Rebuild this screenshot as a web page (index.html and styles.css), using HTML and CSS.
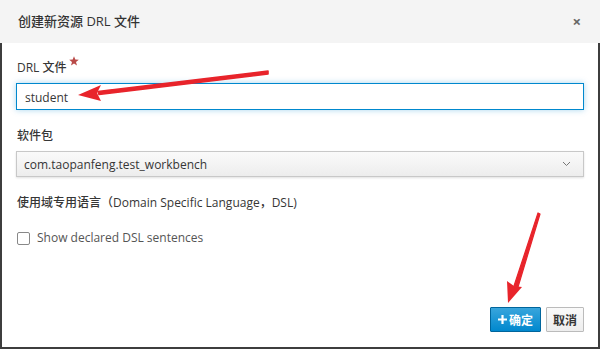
FILE: index.html
```html
<!DOCTYPE html>
<html>
<head>
    <title>创建新资源 DRL 文件</title>
    <link rel="stylesheet" href="styles.css">
</head>
<body>
    <div class="modal">
        <div class="modal-header">
            <span class="modal-title">创建新资源 DRL 文件</span>
            <span class="close">&times;</span>
        </div>

        <div class="modal-body">
            <div class="form-group">
                <label for="file-name">DRL 文件<svg class="required" width="10" height="10" viewBox="0 0 10 10"><path d="M5 0.2 L6.3 3.5 L9.8 3.7 L7 5.9 L8 9.6 L5 7.5 L2 9.6 L3 5.9 L0.2 3.7 L3.7 3.5 Z" fill="#b94a48"/></svg></label>
                <input type="text" id="file-name" class="input focused" value="student">
            </div>

            <div class="form-group">
                <label>软件包</label>
                <div class="select">
                    <span>com.taopanfeng.test_workbench</span>
                    <svg width="9" height="6" viewBox="0 0 9 6"><path d="M1 1 L4.5 4.5 L8 1" fill="none" stroke="#777" stroke-width="1"/></svg>
                </div>
            </div>

            <div class="form-group">
                <label>使用域专用语言（Domain Specific Language，DSL)</label>
            </div>

            <div class="checkbox-row">
                <span class="checkbox"></span>
                <span>Show declared DSL sentences</span>
            </div>
        </div>

        <div class="modal-footer">
            <button class="btn btn-primary"><svg class="plus" width="9" height="9" viewBox="0 0 9 9"><path d="M3.4 0 H5.6 V3.4 H9 V5.6 H5.6 V9 H3.4 V5.6 H0 V3.4 H3.4 Z" fill="#fff"/></svg>确定</button>
            <button class="btn btn-default">取消</button>
        </div>
    </div>

    <!-- annotation arrows drawn over the dialog -->
    <svg class="arrows" width="600" height="349" viewBox="0 0 600 349">
        <path d="M268 71 L98 91.5 L99 94.5 L268 74 Z" fill="#e8242b" stroke="#e8242b" stroke-width="1.6" stroke-linejoin="round"/>
        <path d="M78 95 L101 85 L97 93 L101 101 Z" fill="#e8242b"/>
        <path d="M538 213 L514 286 L518 287 L540 214 Z" fill="#e8242b" stroke="#e8242b" stroke-width="1.2" stroke-linejoin="round"/>
        <path d="M508 303 L507 281 L514 286 L522 287 Z" fill="#e8242b"/>
    </svg>
</body>
</html>
```

FILE: styles.css
```css
body {
    margin: 0;
    font-family: "Open Sans", "Noto Sans CJK SC", sans-serif;
    font-size: 12px;
    color: #363636;
    background-color: #fff;
}
.modal {
    position: relative;
    height: 349px;
    box-sizing: border-box;
    display: flex;
    flex-direction: column;
    border-left: 2px solid #3d3d3d;
    border-right: 2px solid #3d3d3d;
    border-bottom: 2px solid #3d3d3d;
}
.modal-header {
    height: 43px;
    margin: 0 -2px;
    padding: 0 19px 0 18px;
    background-color: #f4f4f4;
    display: flex;
    align-items: center;
    justify-content: space-between;
}
.modal-title {
    font-size: 13px;
    font-weight: 500;
    color: #333;
    margin-top: -2px;
}
.close {
    font-size: 15px;
    font-weight: bold;
    color: #666;
    margin-top: -1px;
}
.modal-body {
    padding: 16px 14px 0 14px;
}
.form-group {
    margin-bottom: 17px;
}
label {
    display: block;
    font-weight: 500;
    line-height: 18px;
    margin-bottom: 6px;
    padding-left: 1px;
}
.required {
    vertical-align: top;
    margin-left: 2px;
    margin-top: -3px;
}
.input {
    display: block;
    width: 100%;
    height: 27px;
    box-sizing: border-box;
    padding: 2px 8px 0 8px;
    font-family: inherit;
    font-size: 12px;
    color: #363636;
    border: 1px solid #bbb;
    outline: none;
}
.input.focused {
    border: 1.5px solid #0088ce;
    box-shadow: 0 0 6px rgba(0, 136, 206, 0.35);
}
.select {
    height: 26px;
    box-sizing: border-box;
    padding: 0 12px 0 7px;
    border: 1px solid #c8c8c8;
    background: linear-gradient(#fafafa, #ededed);
    box-shadow: 0 1px 2px rgba(0, 0, 0, 0.12);
    display: flex;
    align-items: center;
    justify-content: space-between;
    font-size: 12px;
}
.checkbox-row {
    display: flex;
    align-items: center;
    gap: 7px;
    padding-left: 1px;
    color: #555;
    line-height: 18px;
}
.checkbox {
    width: 11px;
    height: 11px;
    border: 1px solid #888;
    border-radius: 2px;
    background: #fff;
}
.modal-footer {
    margin-top: auto;
    padding: 0 14px 15px 0;
    display: flex;
    justify-content: flex-end;
    gap: 5px;
}
.btn {
    height: 25px;
    font-family: inherit;
    font-size: 12px;
    font-weight: 600;
    padding: 0 5px;
    border-radius: 1px;
    display: flex;
    align-items: center;
    justify-content: center;
}
.btn-primary {
    width: 51px;
    color: #fff;
    background: linear-gradient(#39a5dc, #0088ce);
    border: 1px solid #00659c;
}
.plus {
    margin-right: 2px;
}
.btn-default {
    width: 38px;
    color: #363636;
    background: linear-gradient(#fafafa, #ededed);
    border: 1px solid #bbb;
}
.arrows {
    position: absolute;
    left: 0;
    top: 0;
    pointer-events: none;
}
```
